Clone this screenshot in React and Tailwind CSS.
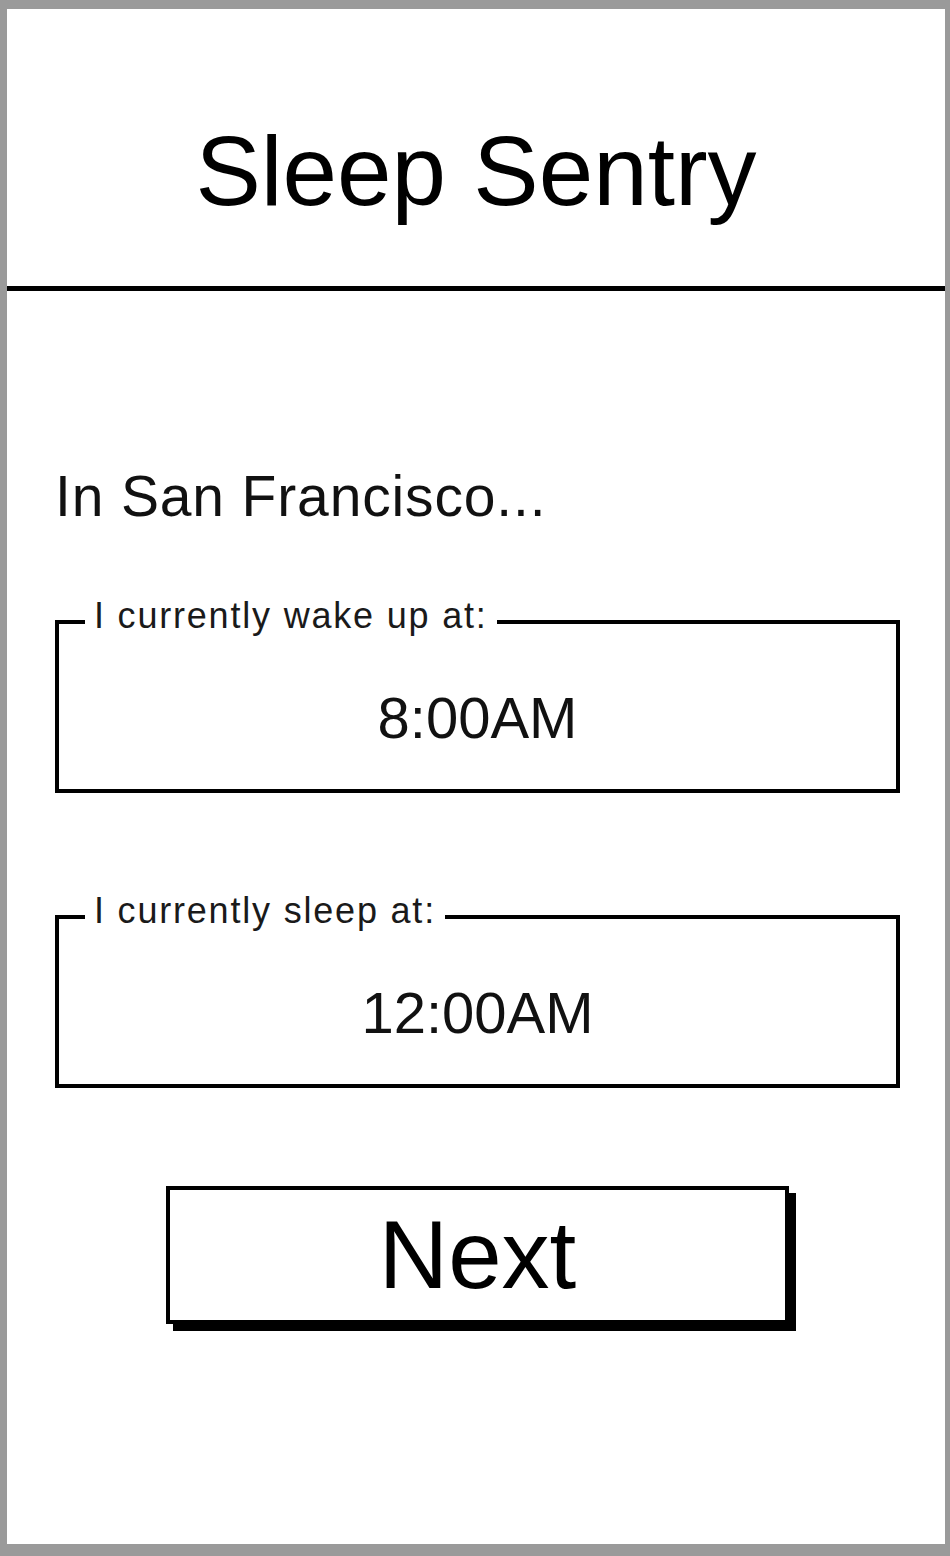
import React from 'react';

const TimeField = ({ label, value, className = '' }) => (
  <fieldset className={`border-4 border-black ${className}`}>
    <legend className="ml-[26px] px-[9px] pb-[12px] text-[36px] leading-none tracking-[0.05em] text-[#1a1a1a]">
      {label}
    </legend>
    <div className="h-[143px] flex items-center justify-center">
      <span className="text-[58px] leading-none text-[#111]">{value}</span>
    </div>
  </fieldset>
);

const App = () => {
  return (
    <div
      className="w-[950px] h-[1556px] bg-white border-[#9a9a9a] border-t-[9px] border-l-[7px] border-r-[5px] border-b-[12px] flex flex-col"
      style={{ fontFamily: '"Liberation Sans", Arial, sans-serif' }}
    >
      {/* Header */}
      <header className="h-[282px] border-b-[5px] border-black pt-[113px] text-center">
        <h1 className="text-[98px] leading-none text-black">Sleep Sentry</h1>
      </header>

      {/* Form */}
      <main className="pl-[48px] pr-[45px] flex flex-col">
        <h2 className="mt-[177px] text-[57px] leading-none tracking-[0.015em] text-[#111]">
          In San Francisco...
        </h2>

        <TimeField className="mt-[73px]" label="I currently wake up at:" value="8:00AM" />
        <TimeField className="mt-[100px]" label="I currently sleep at:" value="12:00AM" />

        <div className="mt-[98px] flex justify-center">
          <button className="w-[623px] h-[138px] bg-white border-4 border-black shadow-[7px_7px_0_0_#000] flex items-center justify-center text-[96px] leading-none text-black">
            Next
          </button>
        </div>
      </main>
    </div>
  );
};

export default App;
